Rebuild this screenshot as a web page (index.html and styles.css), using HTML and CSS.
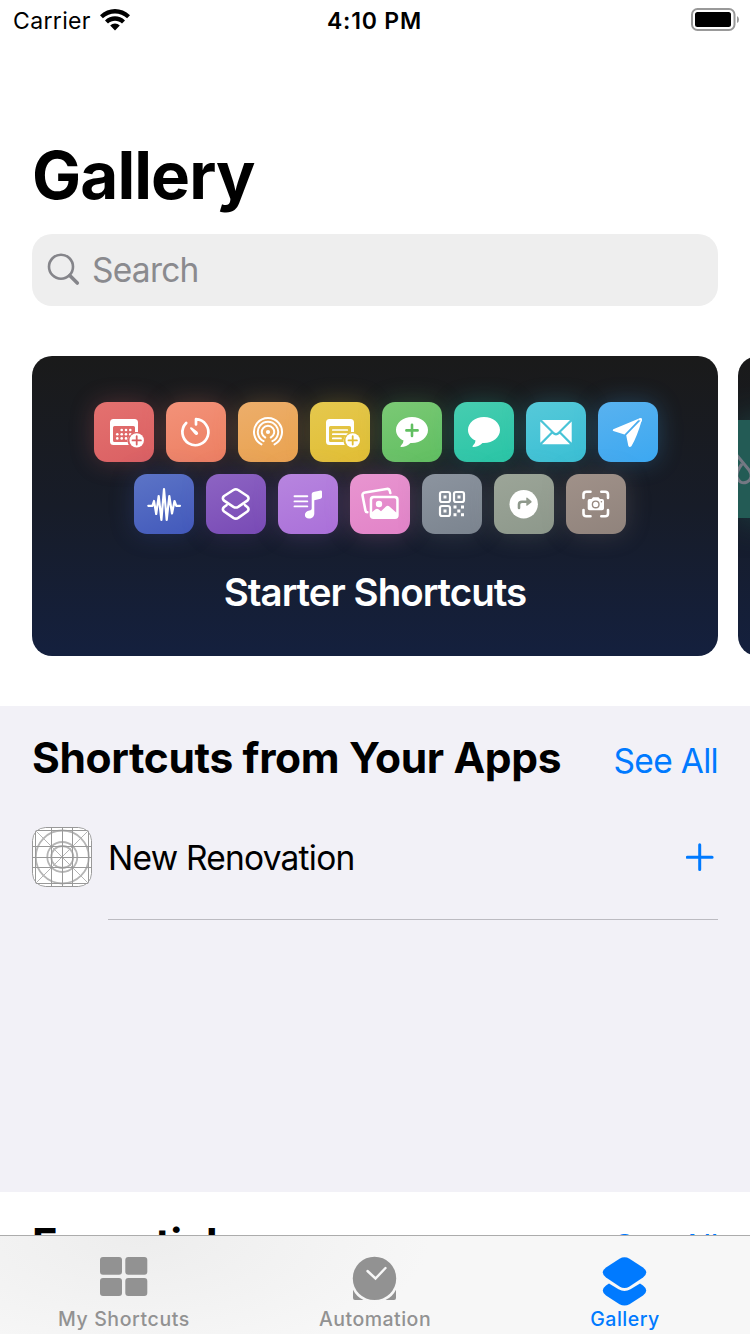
FILE: index.html
```html
<!DOCTYPE html>
<html lang="en">
<head>
<meta charset="utf-8">
<title>Gallery</title>
<link rel="stylesheet" href="styles.css">
</head>
<body>
<header class="status">
  <div class="status-left"><span class="carrier">Carrier</span>
    <svg class="wifi" width="30" height="22" viewBox="0 0 30 22"><path d="M0 6.300C8.500-2.100 21.500-2.100 30 6.300L27.100 9.300C20.300 2.800 9.700 2.800 2.900 9.300ZM5 11.400C10.600 5.900 19.400 5.900 25 11.400L22 14.500C18.100 10.700 11.900 10.700 8 14.500ZM10.200 16.600C12.900 13.900 17.100 13.900 19.800 16.600L15 21.600Z"/></svg>
  </div>
  <span class="clock">4:10 PM</span>
  <svg class="battery" width="50" height="24" viewBox="0 0 50 24"><rect x="1" y="1" width="42.500" height="21" rx="5.500" fill="none" stroke="#999" stroke-width="2"/><rect x="4" y="4" width="36" height="15" rx="2.500"/><path d="M46 8Q48 9 48 11.500T46 15Z" fill="#999"/></svg>
</header>
<main class="content">
  <h1 class="title">Gallery</h1>
  <div class="search">
    <svg width="34" height="34" viewBox="0 0 34 34" fill="none" stroke="#85858a" stroke-linecap="round"><circle cx="14" cy="13.700" r="12" stroke-width="2.600"/><path d="M22.800 22.500L30.300 30" stroke-width="3.600"/></svg>
    <span class="placeholder">Search</span>
  </div>
  <div class="carousel">
    <article class="card">
      <div class="row">
        <svg class="tile red" viewBox="0 0 60 60"><path fill-rule="evenodd" d="M19.500 17H40.500Q44 17 44 20.500V30.500A8.500 8.500 0 0 0 34.800 43H19.500Q16 43 16 39.500V20.500Q16 17 19.500 17ZM20.500 24Q19 24 19 25.500V38.500Q19 40 20.500 40H34Q33 33 41 30V25.500Q41 24 39.500 24Z"/><g><circle cx="27.700" cy="28" r="1.300"/><circle cx="32" cy="28" r="1.300"/><circle cx="36.300" cy="28" r="1.300"/><circle cx="23.300" cy="32.200" r="1.300"/><circle cx="27.700" cy="32.200" r="1.300"/><circle cx="32" cy="32.200" r="1.300"/><circle cx="36.300" cy="32.200" r="1.300"/><circle cx="23.300" cy="36.400" r="1.300"/><circle cx="27.700" cy="36.400" r="1.300"/><circle cx="32" cy="36.400" r="1.300"/></g><circle cx="42.700" cy="38.400" r="8.300" fill="#dd676a"/><circle cx="42.700" cy="38.400" r="7.200"/><path class="cut" d="M42.700 34.200V42.600M38.500 38.400H46.900"/></svg>
        <svg class="tile coral" viewBox="0 0 60 60"><path class="line" stroke-width="2.700" d="M20.200 21A13 13 0 1 0 30 17.200V22.500"/><path d="M24.200 25.500Q24.800 24.800 26 25.600L31.500 29.700Q33 31.700 31.400 32.800Q29.900 33.700 28.600 32L24.400 27Q23.800 26.100 24.200 25.500Z"/></svg>
        <svg class="tile orange" viewBox="0 0 60 60"><circle cx="30" cy="30" r="2.100"/><path class="line" stroke-width="2" d="M23.500 42.400A14 14 0 1 1 36.500 42.400M25.600 39.100A10.200 10.200 0 1 1 34.400 39.100M27.200 35.500A6.200 6.200 0 1 1 32.800 35.500"/></svg>
        <svg class="tile yellow" viewBox="0 0 60 60"><path fill-rule="evenodd" d="M19.500 17H40.500Q44 17 44 20.500V30.500A8.500 8.500 0 0 0 34.800 43H19.500Q16 43 16 39.500V20.500Q16 17 19.500 17ZM20.500 24Q19 24 19 25.500V38.500Q19 40 20.500 40H34Q33 33 41 30V25.500Q41 24 39.500 24Z"/><path class="line" stroke-width="1.700" d="M22.800 28H37.300M22.800 32.200H37M22.800 36.400H31"/><circle cx="42.700" cy="38.400" r="8.300" fill="#e2c03d"/><circle cx="42.700" cy="38.400" r="7.200"/><path class="cut" d="M42.700 34.200V42.600M38.500 38.400H46.900"/></svg>
        <svg class="tile green" viewBox="0 0 60 60"><path d="M30 15C39 15 46 20.700 46 28S39 41 30 41H28.500Q24.500 44.800 19 45Q17.800 44.600 19 43.500Q21.500 41.500 21.500 38.500C17 36.500 14 32.600 14 28C14 20.700 21 15 30 15Z"/><path class="cut" d="M30 22.800V34M24.400 28.400H35.600"/></svg>
        <svg class="tile teal" viewBox="0 0 60 60"><path d="M30 15C39 15 46 20.700 46 28S39 41 30 41H28.500Q24.500 44.800 19 45Q17.800 44.600 19 43.500Q21.500 41.500 21.500 38.500C17 36.500 14 32.600 14 28C14 20.700 21 15 30 15Z"/></svg>
        <svg class="tile cyan" viewBox="0 0 60 60"><path d="M16 18H44L32 30Q30 31.800 28 30ZM14.300 19.500L25 30L14.300 40.800ZM45.700 19.500V40.800L35 30ZM16 42.300L26.300 31.800Q30 35 33.700 31.800L44 42.300Z"/></svg>
        <svg class="tile blue" viewBox="0 0 60 60"><path d="M42.300 16L15.300 27.300Q14 28.200 15.300 29L26.500 32.500ZM43.700 17.300L28.200 33.300L30.300 43.800Q31.400 46 33.400 44.300Q39 35 44 17.500Z"/><path d="M41.500 16.300Q44.500 15.300 44 18L43.200 20L42.400 18.300L40.300 18.500Z"/></svg>
      </div>
      <div class="row">
        <svg class="tile indigo" viewBox="0 0 60 60"><path class="line" stroke-width="2.200" d="M14.300 31.800H18.400L20 27L22.200 40L24.700 22L27.400 46L30 15L32.700 46L35.300 22L38 39.500L40.500 27L42.300 31.800H46"/></svg>
        <svg class="tile purple" viewBox="0 0 60 60"><path class="line" stroke-width="2.600" d="M27.400 16Q29.800 14.500 32.200 16L41.300 22Q43.800 24.300 41.300 26.700L32.200 32.800Q29.800 34.300 27.400 32.800L18.100 26.700Q15.600 24.300 18.100 22ZM20.500 31.200L18.100 33Q15.600 35.300 18.100 37.500L27.400 43.900Q29.800 45.300 32.200 43.900L41.300 37.500Q43.800 35.300 41.300 33L39.100 31.200"/></svg>
        <svg class="tile violet" viewBox="0 0 60 60"><path class="line" stroke-width="1.900" d="M16.500 22.300H29.300M16.500 27.400H29.300M16.500 32.400H29.300"/><path d="M33.700 20Q33.700 18.200 35.500 17.900L42.500 16.400Q44 16.200 44 17.700V23Q44 24.300 42.500 24.700L36.300 26.200V39.500C36.300 42.500 34 44.600 31 44.600C28.500 44.600 26.900 43 26.900 41C26.900 38.700 28.800 37 31.500 36.600Q33.700 36.300 33.700 34.500Z"/></svg>
        <svg class="tile pink" viewBox="0 0 60 60"><path class="line" stroke-width="2.600" d="M17.300 38.200Q15.800 38.200 15.500 36.700L12.600 22Q12 19 15 18.500L36.500 15Q39.200 14.500 39.800 17L40.300 19"/><path fill-rule="evenodd" d="M23.500 21.700H45Q48.700 21.700 48.700 25.400V41.300Q48.700 45 45 45H23.500Q19.700 45 19.700 41.300V25.400Q19.700 21.700 23.500 21.700ZM24 24.200Q22.200 24.200 22.200 26V38L25.500 35.300Q27 34.200 28.500 35.300L31 37.300L36 32.500Q37.700 31 39.400 32.500L46.200 38.500V26Q46.200 24.200 44.400 24.200Z"/><circle cx="29" cy="30" r="3.200"/></svg>
        <svg class="tile slate" viewBox="0 0 60 60"><g class="line" stroke-width="2.200"><rect x="18" y="18" width="10" height="10" rx="2"/><rect x="32" y="18" width="10" height="10" rx="2"/><rect x="18" y="32" width="10" height="10" rx="2"/></g><path d="M21.500 21.500h3v3h-3zM35.500 21.500h3v3h-3zM21.500 35.500h3v3h-3zM31.500 31.500h3v3h-3zM39 31.500h3v3h-3zM35.300 35.500h3v3h-3zM31.500 39.200h3v3h-3zM39 39.200h3v3h-3z"/></svg>
        <svg class="tile sage" viewBox="0 0 60 60"><circle cx="29.700" cy="30.200" r="14.200"/><path class="cut" d="M25 34V30.500Q25 27.700 28 27.700H33"/><path fill="#929b8e" d="M32.300 24.200Q32.300 22.900 33.400 23.700L37.300 27Q38 27.700 37.300 28.400L33.400 31.600Q32.300 32.400 32.300 31.100Z"/></svg>
        <svg class="tile taupe" viewBox="0 0 60 60"><path class="line" stroke-width="2.600" d="M17.500 24V20.500Q17.500 17.700 20.300 17.700H24.500M35.300 17.700H39.200Q42 17.700 42 20.500V24M42 36V39.500Q42 42.300 39.200 42.300H35.300M24.500 42.300H20.300Q17.500 42.300 17.500 39.500V36"/><path d="M23.500 25H25.500L27 23.300H32.500L34 25H36Q38 25 38 27V34.300Q38 36.300 36 36.300H23.700Q21.700 36.300 21.700 34.300V27Q21.700 25 23.500 25Z"/><circle cx="29.700" cy="30.400" r="3.300" fill="none" stroke="#978980" stroke-width="1.400"/><circle cx="35.400" cy="27.700" r=".8" fill="#978980"/></svg>
      </div>
      <h2 class="card-title">Starter Shortcuts</h2>
    </article>
    <article class="card next"><div class="band"><svg width="90" height="98" viewBox="0 0 90 98" fill="none" stroke="#747883" stroke-width="3"><path d="M-3 33L11 50Q16 58 9 62Q2 65-1 57Q-2 52 4 44"/></svg></div></article>
  </div>
  <section class="section apps">
    <div class="heading"><h2 class="h2">Shortcuts from Your Apps</h2><a class="see">See All</a></div>
    <div class="item">
      <svg class="appicon" viewBox="0 0 60 60" fill="none" stroke="#b5b5b5"><rect x=".5" y=".5" width="59" height="59" rx="13" fill="#fff" stroke="#999"/><g stroke-width="1.800"><circle cx="30.300" cy="30" r="26.500"/><circle cx="30.300" cy="30" r="15"/><circle cx="30.300" cy="30" r="11"/></g><path d="M4 4L56 56M56 4L4 56"/><path stroke="#999" d="M3.500 3V57M19.500 0V60M30.500 0V60M40.500 0V60M56.500 3V57M3 3.500H57M0 19.500H60M0 30.500H60M0 40.500H60M3 56.500H57"/></svg>
      <div class="item-body"><span class="item-name">New Renovation</span>
        <svg width="28" height="28" viewBox="0 0 28 28"><path d="M13.700 1.700V26.500M1.300 14.300H26.100" stroke="#007aff" stroke-width="3" stroke-linecap="round"/></svg>
      </div>
    </div>
  </section>
  <section class="section">
    <div class="heading"><h2 class="h2">Essentials</h2><a class="see">See All</a></div>
  </section>
</main>
<nav class="tabs">
  <a class="tab"><svg width="50" height="52" viewBox="0 0 50 52"><rect y="2" width="22" height="17.700" rx="3"/><rect x="25.300" y="2" width="22" height="17.700" rx="3"/><rect y="23" width="22" height="18" rx="3"/><rect x="25.300" y="23" width="22" height="18" rx="3"/></svg><span class="l1">My Shortcuts</span></a>
  <a class="tab"><svg width="50" height="52" viewBox="0 0 50 52"><circle cx="24.500" cy="23.400" r="21.700"/><path d="M3 34.800Q6.500 42 13.500 45H5Q3 45 3 43ZM46 34.800Q42.500 42 35.500 45H44Q46 45 46 43Z"/><path d="M17.500 16L25.500 23.500L35.500 13" fill="none" stroke="#f7f7f7" stroke-width="2.400" stroke-linecap="round"/></svg><span>Automation</span></a>
  <a class="tab active"><svg width="50" height="52" viewBox="0 0 50 52"><path d="M19.500 3.700Q24.500 1 29.500 3.700L43 12.500Q49.500 17.500 43 22.500L29.500 31.500Q24.500 34.600 19.500 31.500L6 22.500Q-.5 17.500 6 12.500Z"/><path d="M9 28.500L18.500 34.300Q24.500 37.600 30.500 34.300L40 28.500L43 30.500Q49.500 35.500 43 40.500L29.500 49.200Q24.500 52 19.500 49.200L6 40.500Q-.5 35.500 6 30.500Z"/></svg><span>Gallery</span></a>
</nav>
</body>
</html>
```
FILE: styles.css
```css
* { box-sizing: border-box; }
body { margin: 0; width: 750px; height: 1334px; display: flex; flex-direction: column; overflow: hidden; background: #fff; color: #000; font-family: Inter, "Liberation Sans", sans-serif; }
h1, h2 { margin: 0; white-space: nowrap; }
span { white-space: nowrap; }
svg { display: block; flex: none; }

.status { height: 40px; flex: none; display: grid; grid-template-columns: 1fr auto 1fr; align-items: center; padding: 0 10px 0 13px; }
.status-left { display: flex; align-items: center; gap: 9px; }
.carrier { font-size: 23px; line-height: 38px; padding-top: 2px; letter-spacing: .35px; }
.clock { font-size: 23px; font-weight: 600; line-height: 38px; padding-top: 2px; margin-left: -4px; letter-spacing: .8px; }
.battery { justify-self: end; margin-right: -1px; }

.content { flex: 1; min-height: 0; overflow: hidden; }
.title { margin-top: 96px; padding-left: 32px; height: 98px; font-size: 65.500px; line-height: 80px; font-weight: 700; letter-spacing: -.9px; }
.search { height: 72px; margin: 0 32px; padding-left: 15px; display: flex; align-items: center; gap: 11px; border-radius: 20px; background: #eee; }
.placeholder { font-size: 33.500px; letter-spacing: -.75px; color: #8a8a8e; }

.carousel { display: flex; gap: 20px; margin-top: 50px; padding-left: 32px; overflow: hidden; }
.card { flex: none; width: 686px; height: 300px; border-radius: 20px; padding-top: 46px; overflow: hidden; background: linear-gradient(#1a1a1a, #171c28 50%, #14203e); display: flex; flex-direction: column; align-items: center; gap: 12px; }
.row { display: flex; gap: 12px; padding-left: 2px; }
.row + .row { padding-left: 10px; }
.row + .row { padding-left: 0; padding-right: 0; align-self: flex-start; margin-left: 102px; }
.tile { width: 60px; height: 60px; border-radius: 13px; fill: #fff; background: linear-gradient(160deg, var(--a), var(--b)); box-shadow: 0 0 24px color-mix(in srgb, var(--b) 28%, transparent); }
.line { fill: none; stroke: #fff; stroke-linecap: round; stroke-linejoin: round; }
.cut { fill: none; stroke: var(--b); stroke-width: 1.800px; stroke-linecap: round; }
.green .cut, .sage .cut { stroke-width: 2.600px; }
.red { --a: #e4716f; --b: #da6063; }
.coral { --a: #f39279; --b: #ec7f62; }
.orange { --a: #edae6b; --b: #e9a24f; }
.yellow { --a: #e5c84e; --b: #e1be34; }
.green { --a: #7bc975; --b: #61bf61; }
.teal { --a: #47cdb0; --b: #29c5a6; }
.cyan { --a: #56c9d9; --b: #3abfd4; }
.blue { --a: #59b2ef; --b: #3ca8f1; }
.indigo { --a: #5c74c6; --b: #4259bb; }
.purple { --a: #8d64c3; --b: #784ab5; }
.violet { --a: #b785df; --b: #aa70d9; }
.pink { --a: #e895d0; --b: #e283c8; }
.slate { --a: #8c949f; --b: #7b848f; }
.sage { --a: #9ca598; --b: #8d988b; }
.taupe { --a: #a09189; --b: #90837c; }
.card-title { margin-top: 22px; color: #fff; font-size: 38.500px; font-weight: 600; line-height: 48px; letter-spacing: -1px; }
.next { padding-top: 64px; align-items: flex-start; }
.band { width: 686px; height: 98px; background: #235b55; box-shadow: 0 0 34px #235b55aa; }

.section { height: 486px; padding: 0 32px; }
.apps { margin-top: 50px; background: #f2f1f7; }
.heading { display: flex; align-items: baseline; justify-content: space-between; height: 121px; padding-top: 25px; }
.h2 { font-size: 42.500px; line-height: 54px; font-weight: 700; letter-spacing: -.36px; }
.see { font-size: 33.500px; color: #007aff; letter-spacing: -.7px; white-space: nowrap; }
.item { display: flex; gap: 16px; }
.appicon { width: 60px; height: 60px; border-radius: 13px; }
.item-body { flex: 1; height: 93px; padding-right: 4px; border-bottom: 1px solid #bcbbc1; display: flex; justify-content: space-between; }
.item-name { font-size: 33.500px; line-height: 62px; letter-spacing: -.77px; }
.item-body svg { margin-top: 16px; }

.tabs { flex: none; height: 99px; padding-top: 19px; display: grid; grid-template-columns: repeat(3, 250px); border-top: 1px solid #acacac; background: radial-gradient(ellipse 290px 130px at 140px 0, #ededed, #f7f7f7 100%); }
.tab { display: flex; flex-direction: column; align-items: center; color: #929292; fill: currentColor; font-size: 19.500px; font-weight: 500; line-height: 24px; letter-spacing: .5px; }
.tab.active { color: #007aff; }
.l1 { letter-spacing: .6px; margin-left: -2px; }
```
